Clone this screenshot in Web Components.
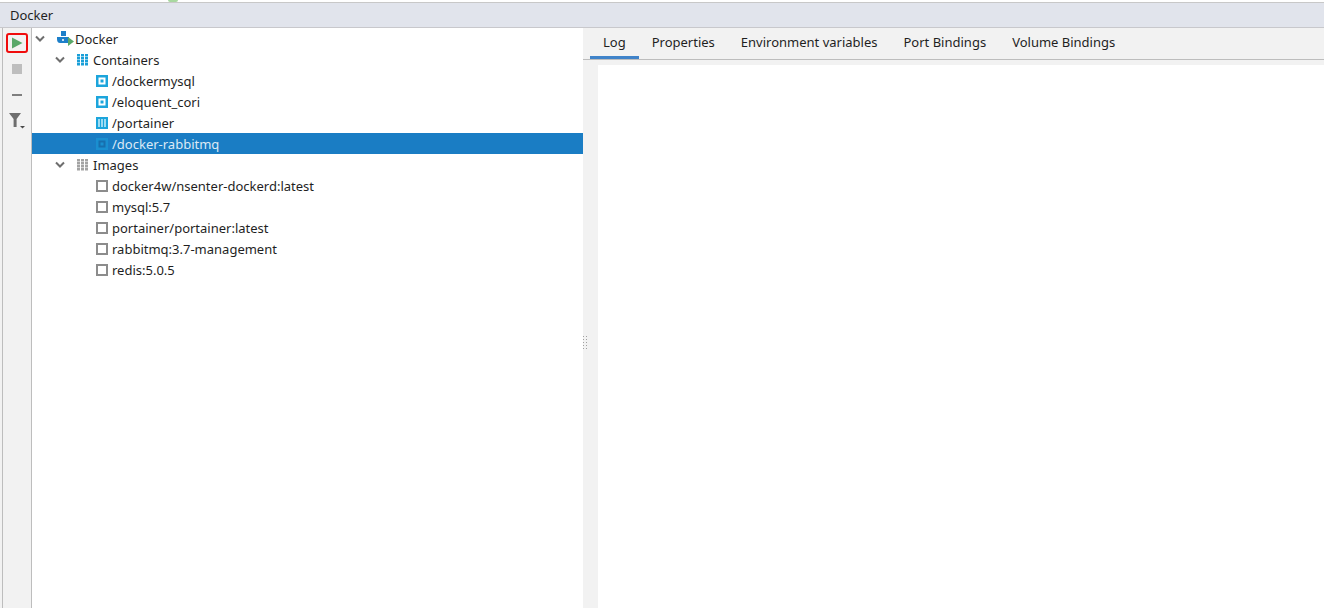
<!DOCTYPE html>
<html>
<head>
<meta charset="utf-8">
<title>Docker</title>
<style>
  html, body { margin: 0; height: 100%; background: #fff; overflow: hidden; }
  body { font-family: "Noto Sans", "Open Sans", sans-serif; font-size: 13px; color: #1f1f1f; }
</style>
</head>
<body>
<docker-panel>
  <tool-bar slot="tools"></tool-bar>
  <tree-view slot="tree">
    <tree-row level="0" icon="docker" open>Docker</tree-row>
    <tree-row level="1" icon="grid-blue" open>Containers</tree-row>
    <tree-row level="2" icon="box">/dockermysql</tree-row>
    <tree-row level="2" icon="box">/eloquent_cori</tree-row>
    <tree-row level="2" icon="bars">/portainer</tree-row>
    <tree-row level="2" icon="box" selected>/docker-rabbitmq</tree-row>
    <tree-row level="1" icon="grid-grey" open>Images</tree-row>
    <tree-row level="2" icon="square">docker4w/nsenter-dockerd:latest</tree-row>
    <tree-row level="2" icon="square">mysql:5.7</tree-row>
    <tree-row level="2" icon="square">portainer/portainer:latest</tree-row>
    <tree-row level="2" icon="square">rabbitmq:3.7-management</tree-row>
    <tree-row level="2" icon="square">redis:5.0.5</tree-row>
  </tree-view>
  <tab-bar slot="tabs">
    <tab-item active>Log</tab-item>
    <tab-item>Properties</tab-item>
    <tab-item>Environment variables</tab-item>
    <tab-item>Port Bindings</tab-item>
    <tab-item>Volume Bindings</tab-item>
  </tab-bar>
</docker-panel>

<script>
class DockerPanel extends HTMLElement {
  constructor() {
    super();
    this.attachShadow({ mode: 'open' }).innerHTML = `
    <style>
      :host { display: flex; flex-direction: column; height: 100vh; }
      .strip { height: 2px; background: #fff; position: relative; }
      .strip i { position: absolute; left: 168px; top: 0; width: 10px; height: 2px; background: #a8d8a0; border-radius: 0 0 5px 5px; }
      .title {
        height: 24px; line-height: 25px; padding-left: 10px; background: #e1e4ec;
        border-top: 1px solid #c8c8c8; border-bottom: 1px solid #c8c8cc; flex: none;
      }
      .main { flex: 1; display: flex; min-height: 0; }
      .edge { width: 2px; background: #f2f2f2; flex: none; }
      .tools { width: 28px; flex: none; background: #f2f2f2; border-left: 1px solid #bdbdbd; border-right: 1px solid #bdbdbd; }
      .tree { width: 551px; flex: none; background: #fff; }
      .right { flex: 1; display: flex; flex-direction: column; background: #f2f2f2; min-width: 0; position: relative; }
      .grip { position: absolute; left: 0; top: 308px; width: 6px; height: 14px; display: grid; grid-template-columns: 2px 2px; gap: 1px; }
      .grip b { width: 1px; height: 1px; background: #a0a0a0; }
      .log { flex: 1; margin: 5px 0 0 15px; background: #fff; }
    </style>
    <div class="strip"><i></i></div>
    <div class="title">Docker</div>
    <div class="main">
      <div class="edge"></div>
      <div class="tools"><slot name="tools"></slot></div>
      <div class="tree"><slot name="tree"></slot></div>
      <div class="right">
        <slot name="tabs"></slot>
        <div class="log"></div>
        <div class="grip">${'<b></b>'.repeat(10)}</div>
      </div>
    </div>`;
  }
}

class ToolBar extends HTMLElement {
  constructor() {
    super();
    this.attachShadow({ mode: 'open' }).innerHTML = `
    <style>
      :host { display: flex; flex-direction: column; align-items: center; padding-top: 5px; }
      .btn { width: 22px; height: 20px; display: flex; align-items: center; justify-content: center; margin-bottom: 6px; box-sizing: border-box; }
      .run { border: 2px solid #f00c0c; border-radius: 3px; }
      svg { display: block; }
    </style>
    <div class="btn run"><svg width="12" height="12" viewBox="0 0 12 12"><path d="M1 0.5 L11.5 6 L1 11.5 Z" fill="#59a869"/></svg></div>
    <div class="btn"><svg width="10" height="10"><rect width="10" height="10" fill="#bebebe"/></svg></div>
    <div class="btn"><svg width="10" height="2"><rect width="10" height="2" fill="#7f7f7f"/></svg></div>
    <div class="btn"><svg width="16" height="16" viewBox="0 0 16 16"><path d="M0 0 H12 L7.6 6 V14 H4.6 V6 Z" fill="#6e6e6e"/><path d="M11 13 H16 L13.500 15.500 Z" fill="#4a4a4a"/></svg></div>`;
  }
}

class TreeView extends HTMLElement {
  constructor() {
    super();
    this.attachShadow({ mode: 'open' }).innerHTML = `
    <style>:host { display: block; padding-top: 0; }</style><slot></slot>`;
  }
}

const ICONS = {
  docker: `<svg width="18" height="16" viewBox="0 0 18 16"><rect x="4" y="0" width="5" height="5" fill="#1d7fc9"/><path d="M0 6 H12 V12 H3 Q0 12 0 8 Z" fill="#1d7fc9"/><circle cx="6" cy="9" r="1" fill="#fff"/><path d="M11 6 L17 10.500 L11 15 Z" fill="#59a869"/></svg>`,
  'grid-blue': grid('#1a9fd8'),
  'grid-grey': grid('#a3a3a3'),
  box: `<svg width="12" height="12"><rect width="12" height="12" fill="var(--ic,#1ca5dc)"/><rect x="2.500" y="2.500" width="7" height="7" fill="var(--in,#fff)"/><rect x="4.500" y="4.500" width="3" height="3" fill="var(--ic,#1ca5dc)"/></svg>`,
  bars: `<svg width="12" height="12"><rect width="12" height="12" fill="#1ca5dc"/><path d="M2 2 h2 v8 h-2 z M5 2 h2 v8 h-2 z M8 2 h2 v8 h-2 z" fill="#9edcf3"/></svg>`,
  square: `<svg width="12" height="12"><rect x="1" y="1" width="10" height="10" fill="#fff" stroke="#8c8c8c" stroke-width="2"/></svg>`
};

function grid(c) {
  let r = '';
  for (let y = 0; y < 4; y++) for (let x = 0; x < 3; x++) r += `<rect x="${x * 4}" y="${y * 3 + (y ? y - 1 : 0) * 0}" width="3" height="2.500" fill="${c}"/>`;
  return `<svg width="12" height="12">${r}</svg>`;
}

class TreeRow extends HTMLElement {
  constructor() {
    super();
    const level = +this.getAttribute('level');
    const open = this.hasAttribute('open');
    this.attachShadow({ mode: 'open' }).innerHTML = `
    <style>
      :host { display: flex; align-items: center; height: 21px; white-space: nowrap; color: #1f1f1f; }
      :host([selected]) { background: #1a7dc4; color: #dce9f5; --ic: #1a8fd0; --in: #176fae; }
      .arrow { width: 12px; height: 8px; margin-right: 8px; flex: none; }
      .icon { width: 12px; display: flex; flex: none; margin-right: 4px; }
      .icon.wide { width: 18px; margin-right: 0; }
    </style>
    <span style="width:${[2, 22, 64][level]}px;flex:none"></span>
    ${open ? '<svg class="arrow" viewBox="0 0 12 8"><path d="M2 1.500 L6 5.500 L10 1.500" fill="none" stroke="#6e6e6e" stroke-width="2"/></svg>' : ''}
    <span class="icon ${level === 0 ? 'wide' : ''}" style="${level === 0 ? 'margin-left:3px' : level === 1 ? 'margin-left:3px' : ''}">${ICONS[this.getAttribute('icon')]}</span>
    <slot></slot>`;
  }
}

class TabBar extends HTMLElement {
  constructor() {
    super();
    this.attachShadow({ mode: 'open' }).innerHTML = `
    <style>:host { display: flex; height: 31px; padding-left: 7px; border-bottom: 1px solid #bdbdbd; flex: none; }</style><slot></slot>`;
  }
}

class TabItem extends HTMLElement {
  constructor() {
    super();
    this.attachShadow({ mode: 'open' }).innerHTML = `
    <style>
      :host { display: flex; align-items: center; height: 31px; padding: 0 13px; box-sizing: border-box; padding-bottom: 3px; white-space: nowrap; color: #1f1f1f; }
      :host([active]) { border-bottom: 3px solid #4083c9; padding-bottom: 0; }
    </style><slot></slot>`;
  }
}

customElements.define('docker-panel', DockerPanel);
customElements.define('tool-bar', ToolBar);
customElements.define('tree-view', TreeView);
customElements.define('tree-row', TreeRow);
customElements.define('tab-bar', TabBar);
customElements.define('tab-item', TabItem);
</script>
</body>
</html>
